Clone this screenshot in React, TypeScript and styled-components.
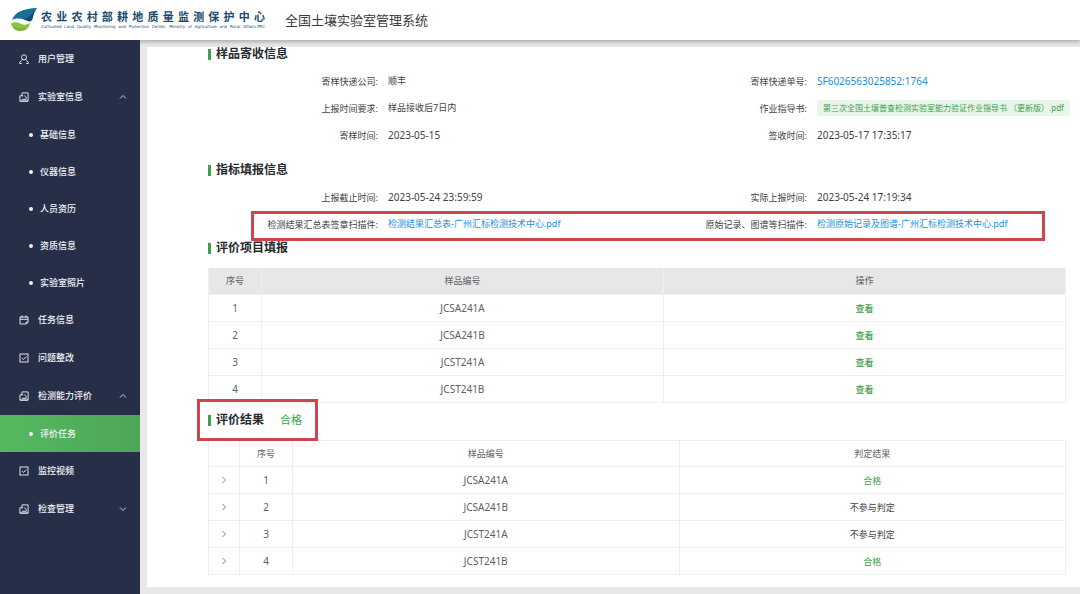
import React from "react";
import styled, { createGlobalStyle, css } from "styled-components";

const color = {
  navy: "#272e48",
  green: "#3f9f4b",
  link: "#1c8fdc",
  text: "#3f4144",
  muted: "#5c5f63",
  line: "#eeeff1",
  mark: "#cb474c",
};

const GlobalStyle = createGlobalStyle`
  *, *::before, *::after { box-sizing: border-box; }
  body {
    margin: 0;
    background: #e8e8e9;
    color: ${color.text};
    font-family: "Noto Sans", "Noto Sans CJK SC", sans-serif;
    font-size: 9px;
    line-height: 12px;
  }
  button { font: inherit; color: inherit; background: none; border: 0; padding: 0; cursor: pointer; }
  a { text-decoration: none; color: inherit; }
`;

const Page = styled.div`
  display: flex;
  flex-direction: column;
  min-height: 100vh;
`;

const Header = styled.header`
  position: relative;
  z-index: 1;
  display: flex;
  align-items: center;
  height: 40px;
  padding-left: 10px;
  background: #fff;
  box-shadow: 0 2px 4px rgba(0, 0, 0, 0.26);
`;

const Brand = styled.div`
  display: flex;
  align-items: center;
  gap: 3px;
`;

const BrandText = styled.div`
  width: 224px;
  color: #1b4a6e;
  text-align-last: justify;
  white-space: nowrap;
`;

const BrandName = styled.div`
  font-size: 11px;
  line-height: 14px;
  font-weight: 700;
`;

const BrandSub = styled.div`
  font-family: "DejaVu Sans", sans-serif;
  font-size: 4px;
  line-height: 6px;
`;

const SystemName = styled.h1`
  margin: 0 0 0 20px;
  font-size: 13px;
  line-height: 20px;
  font-weight: 400;
  color: #3a3a3a;
`;

const Body = styled.div`
  display: flex;
  flex: 1;
`;

const Sidebar = styled.nav`
  position: relative;
  z-index: 2;
  flex: 0 0 140px;
  background: ${color.navy};
  color: #f1f3f8;
`;

const itemBase = css`
  display: flex;
  align-items: center;
  width: 100%;
  font-size: 9px;
  font-weight: 500;
  text-align: left;
`;

const MenuItem = styled.button`
  ${itemBase}
  height: 38px;
  padding: 0 13px 0 19px;
  gap: 9px;
`;

const MenuLabel = styled.span`
  flex: 1;
`;

const SubItem = styled.a<{ $active?: boolean }>`
  ${itemBase}
  height: 37px;
  padding-left: 29px;
  gap: 7px;
  background: ${(p) => (p.$active ? "linear-gradient(90deg, #55b961, #4da656)" : "none")};
  &::before {
    content: "";
    width: 4px;
    height: 4px;
    border-radius: 50%;
    background: currentColor;
  }
`;

const Panel = styled.main`
  flex: 1;
  min-width: 0;
  margin: 7px 0 7px 7px;
  padding: 0 14px 12px 61px;
  background: #fff;
`;

const SectionTitle = styled.h2`
  position: relative;
  display: flex;
  width: fit-content;
  align-items: center;
  margin: 0;
  font-size: 12px;
  line-height: 14px;
  font-weight: 700;
  color: #26282b;
  &::before {
    content: "";
    width: 3px;
    height: 11px;
    margin-right: 5px;
    background: ${color.green};
  }
`;

const Verdict = styled.span`
  margin-left: 16px;
  font-size: 11px;
  font-weight: 400;
  color: ${color.green};
`;

const Fields = styled.div<{ $tight?: boolean }>`
  padding: ${(p) => (p.$tight ? "6px 0 4px" : "6px 0 15px")};
`;

const FieldRow = styled.div`
  position: relative;
  display: grid;
  grid-template-columns: repeat(2, minmax(0, 1fr));
  height: 27px;
`;

const Field = styled.div`
  display: flex;
  align-items: center;
  gap: 10px;
  white-space: nowrap;
`;

const FieldLabel = styled.span`
  flex: 0 0 170px;
  padding-top: 2px;
  text-align: right;
`;

const Value = styled.span`
  font-size: 9px;
`;

const NumericValue = styled.span`
  font-size: 10px;
`;

const NumericLink = styled.a`
  font-size: 10px;
  color: ${color.link};
`;

const FileLink = styled.a`
  color: ${color.link};
`;

const FileTag = styled.a`
  padding: 2px 6px;
  border-radius: 2px;
  background: #e8f5e9;
  color: ${color.green};
  font-size: 8px;
`;

const Mark = styled.span`
  position: absolute;
  border: 3px solid ${color.mark};
  pointer-events: none;
`;

const RowMark = styled(Mark)`
  inset: 1px 21px -4px 43px;
`;

const TitleMark = styled(Mark)`
  inset: -14px -16px -14px -11px;
`;

const Table = styled.table<{ $plain?: boolean }>`
  width: 100%;
  margin: 13px 0 ${(p) => (p.$plain ? "0" : "10px")};
  table-layout: fixed;
  border-collapse: separate;
  border-spacing: 0;
  border-right: 1px solid ${color.line};
  color: ${color.muted};
  text-align: center;

  th, td {
    height: 27px;
    padding: 0;
    border-left: 1px solid ${color.line};
    border-bottom: 1px solid ${color.line};
  }
  th {
    font-size: 9px;
    font-weight: 400;
    background: ${(p) => (p.$plain ? "#fff" : "#e7e7e8")};
    border-top: ${(p) => (p.$plain ? `1px solid ${color.line}` : "0")};
  }
  td {
    font-size: 10px;
  }
`;

const NarrowCol = styled.col`
  width: 31px;
`;

const IndexCol = styled.col`
  width: 53px;
`;

const RowLink = styled.a`
  font-size: 9px;
  font-weight: 500;
  color: ${color.green};
`;

const Result = styled.span<{ $pass: boolean }>`
  font-size: 9px;
  color: ${(p) => (p.$pass ? color.green : color.text)};
`;

const ExpandButton = styled.button`
  display: block;
  margin: 0 auto;
  height: 8px;
  line-height: 0;
`;

const Logo = () => (
  <svg width="28" height="26" viewBox="0 0 28 26" aria-hidden="true">
    <path d="M2 13C5 5 13 1.500 27 1c-2.500 3-3.500 6-4 9-.5 2.500-1.500 4-3.500 4.500C14 12 8 10 2 13z" fill="#1a6f95" />
    <path d="M27 1c-2.500 3-3.500 6-4 9-.5 2.500-1.500 4-3.500 4.500-2-.8-4-1.500-6-2C19 11 22 6 27 1z" fill="#124a78" />
    <path d="M1 16.500c4-2.500 7.500-1 10.500.5 3 1.300 6 .8 8.500-1.500-.3 5-4 8.500-9.500 8.500C5.500 24 1.500 21 1 16.500z" fill="#8cc344" />
    <path d="M3 19.500c4 1.800 9 2.500 14.500.8C13.500 24.800 6 25 3 19.500z" fill="#74b13a" />
  </svg>
);

const paths = {
  user: (
    <>
      <circle cx="5" cy="3.300" r="2.500" />
      <path d="M2.800 9.500H.6C.8 7.500 2.200 6.200 3.700 5.600M7.200 9.500h2.200C9.200 7.500 7.800 6.200 6.300 5.600" />
    </>
  ),
  report: (
    <path d="M3 .9h6.100v8.200H.9V3.800h3.300M3 .9v2.900M.9 9.100h8.200M2.800 7.300h4.400M5.300 3.600l1.900 1.700v2" />
  ),
  calendar: (
    <path d="M1 2h8v5.300L7.300 9H1zM1 4.300h8M3 .4v2.400M7 .4v2.400M7.200 9V7.200H9" />
  ),
  check: (
    <>
      <rect x="1" y="1" width="8" height="8" />
      <path d="M3 5l1.500 1.500L7.300 3.500" />
    </>
  ),
};

type IconName = keyof typeof paths;

const MenuIcon = ({ name }: { name: IconName }) => (
  <svg width="10" height="10" viewBox="0 0 10 10" fill="none" stroke="currentColor" strokeWidth="0.9" aria-hidden="true">
    {paths[name]}
  </svg>
);

const chevrons = { up: "M1 5.500 4 2.500l3 3", down: "M1 2.500l3 3 3-3", right: "M2.500 1l3 3-3 3" };

const Chevron = ({ dir }: { dir: keyof typeof chevrons }) => (
  <svg width="8" height="8" viewBox="0 0 8 8" fill="none" stroke="currentColor" strokeWidth="0.8" aria-hidden="true">
    <path d={chevrons[dir]} />
  </svg>
);

type Entry = { label: string; icon: IconName; dir?: "up" | "down"; children?: string[] };

const menu: Entry[] = [
  { label: "用户管理", icon: "user" },
  {
    label: "实验室信息",
    icon: "report",
    dir: "up",
    children: ["基础信息", "仪器信息", "人员资历", "资质信息", "实验室照片"],
  },
  { label: "任务信息", icon: "calendar" },
  { label: "问题整改", icon: "check" },
  { label: "检测能力评价", icon: "report", dir: "up", children: ["评价任务"] },
  { label: "监控视频", icon: "check" },
  { label: "检查管理", icon: "report", dir: "down" },
];

const samples = [
  { code: "JCSA241A", result: "合格" },
  { code: "JCSA241B", result: "不参与判定" },
  { code: "JCST241A", result: "不参与判定" },
  { code: "JCST241B", result: "合格" },
];

const Item = ({ label, children }: { label: string; children: React.ReactNode }) => (
  <Field>
    <FieldLabel>{label}:</FieldLabel>
    {children}
  </Field>
);

export default function App() {
  return (
    <Page>
      <GlobalStyle />
      <Header>
        <Brand>
          <Logo />
          <BrandText>
            <BrandName>农业农村部耕地质量监测保护中心</BrandName>
            <BrandSub>
              Cultivated Land Quality Monitoring and Protection Center, Ministry of Agriculture and Rural Affairs.PRC
            </BrandSub>
          </BrandText>
        </Brand>
        <SystemName>全国土壤实验室管理系统</SystemName>
      </Header>
      <Body>
        <Sidebar>
          {menu.map((entry) => (
            <React.Fragment key={entry.label}>
              <MenuItem type="button">
                <MenuIcon name={entry.icon} />
                <MenuLabel>{entry.label}</MenuLabel>
                {entry.dir && <Chevron dir={entry.dir} />}
              </MenuItem>
              {entry.children?.map((child) => (
                <SubItem key={child} href="#" $active={child === "评价任务"}>
                  {child}
                </SubItem>
              ))}
            </React.Fragment>
          ))}
        </Sidebar>
        <Panel>
          <SectionTitle>样品寄收信息</SectionTitle>
          <Fields>
            <FieldRow>
              <Item label="寄样快递公司"><Value>顺丰</Value></Item>
              <Item label="寄样快递单号"><NumericLink href="#">SF6026563025852:1764</NumericLink></Item>
            </FieldRow>
            <FieldRow>
              <Item label="上报时间要求"><Value>样品接收后7日内</Value></Item>
              <Item label="作业指导书">
                <FileTag href="#">第三次全国土壤普查检测实验室能力验证作业指导书 （更新版）.pdf</FileTag>
              </Item>
            </FieldRow>
            <FieldRow>
              <Item label="寄样时间"><NumericValue>2023-05-15</NumericValue></Item>
              <Item label="签收时间"><NumericValue>2023-05-17 17:35:17</NumericValue></Item>
            </FieldRow>
          </Fields>

          <SectionTitle>指标填报信息</SectionTitle>
          <Fields $tight>
            <FieldRow>
              <Item label="上报截止时间"><NumericValue>2023-05-24 23:59:59</NumericValue></Item>
              <Item label="实际上报时间"><NumericValue>2023-05-24 17:19:34</NumericValue></Item>
            </FieldRow>
            <FieldRow>
              <Item label="检测结果汇总表签章扫描件">
                <FileLink href="#">检测结果汇总表-广州汇标检测技术中心.pdf</FileLink>
              </Item>
              <Item label="原始记录、图谱等扫描件">
                <FileLink href="#">检测原始记录及图谱-广州汇标检测技术中心.pdf</FileLink>
              </Item>
              <RowMark />
            </FieldRow>
          </Fields>

          <SectionTitle>评价项目填报</SectionTitle>
          <Table>
            <colgroup>
              <IndexCol />
              <col />
              <col />
            </colgroup>
            <thead>
              <tr>
                <th>序号</th>
                <th>样品编号</th>
                <th>操作</th>
              </tr>
            </thead>
            <tbody>
              {samples.map((s, i) => (
                <tr key={s.code}>
                  <td>{i + 1}</td>
                  <td>{s.code}</td>
                  <td><RowLink href="#">查看</RowLink></td>
                </tr>
              ))}
            </tbody>
          </Table>

          <SectionTitle>
            评价结果<Verdict>合格</Verdict>
            <TitleMark />
          </SectionTitle>
          <Table $plain>
            <colgroup>
              <NarrowCol />
              <IndexCol />
              <col />
              <col />
            </colgroup>
            <thead>
              <tr>
                <th />
                <th>序号</th>
                <th>样品编号</th>
                <th>判定结果</th>
              </tr>
            </thead>
            <tbody>
              {samples.map((s, i) => (
                <tr key={s.code}>
                  <td>
                    <ExpandButton type="button" aria-label="展开">
                      <Chevron dir="right" />
                    </ExpandButton>
                  </td>
                  <td>{i + 1}</td>
                  <td>{s.code}</td>
                  <td><Result $pass={s.result === "合格"}>{s.result}</Result></td>
                </tr>
              ))}
            </tbody>
          </Table>
        </Panel>
      </Body>
    </Page>
  );
}
